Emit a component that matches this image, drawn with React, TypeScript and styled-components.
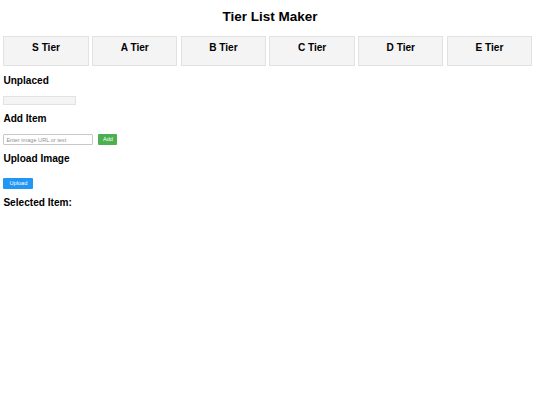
import React from "react";
import styled, { createGlobalStyle } from "styled-components";

const GlobalStyle = createGlobalStyle`
  html, body { margin: 0; padding: 0; background: #ffffff; }
  body { font-family: "Liberation Sans", Arial, sans-serif; color: #000; }
`;

const Page = styled.div`
  padding: 0 3.4px;
  display: flex;
  flex-direction: column;
  align-items: flex-start;
`;

const Title = styled.h1`
  align-self: stretch;
  margin: 9px 0 0;
  font-size: 13.5px;
  line-height: 15px;
  font-weight: bold;
  text-align: center;
`;

const TierRow = styled.div`
  display: flex;
  gap: 3.4px;
  margin: 12px 0 1px;
`;

const TierBox = styled.div`
  box-sizing: border-box;
  width: 85.3px;
  height: 30px;
  padding-top: 4.5px;
  background: #f4f4f4;
  border: 1px solid #e2e2e2;
  font-size: 10.1px;
  line-height: 12px;
  font-weight: bold;
  text-align: center;
`;

const SectionTitle = styled.h2<{ $gapBelow?: number }>`
  margin: 8px 0 ${(p) => p.$gapBelow ?? 9}px;
  font-size: 10.1px;
  line-height: 12px;
  font-weight: bold;
`;

const DropZone = styled.div`
  box-sizing: border-box;
  width: 73px;
  height: 9px;
  background: #f4f4f4;
  border: 1px solid #e2e2e2;
`;

const FormRow = styled.div`
  display: flex;
  align-items: center;
  gap: 5px;
`;

const TextInput = styled.input`
  box-sizing: border-box;
  width: 90px;
  height: 11px;
  padding: 0 2px;
  border: 0.6px solid #c8c8c8;
  border-radius: 1px;
  font-family: "Liberation Sans", Arial, sans-serif;
  font-size: 5.6px;
  outline: none;
  &::placeholder { color: #8f8f8f; }
`;

const ActionButton = styled.button<{ $color: string; $width: number }>`
  box-sizing: border-box;
  width: ${(p) => p.$width}px;
  height: 10.5px;
  padding: 0;
  border: none;
  border-radius: 1px;
  background: ${(p) => p.$color};
  color: #fff;
  font-family: "Liberation Sans", Arial, sans-serif;
  font-size: 5.6px;
  line-height: 10.5px;
  text-align: center;
`;

const tiers = ["S Tier", "A Tier", "B Tier", "C Tier", "D Tier", "E Tier"];

export default function App() {
  return (
    <>
      <GlobalStyle />
      <Page>
        <Title>Tier List Maker</Title>
        <TierRow>
          {tiers.map((t) => (
            <TierBox key={t}>{t}</TierBox>
          ))}
        </TierRow>
        <SectionTitle>Unplaced</SectionTitle>
        <DropZone />
        <SectionTitle>Add Item</SectionTitle>
        <FormRow>
          <TextInput placeholder="Enter image URL or text" />
          <ActionButton $color="#4caf50" $width={19}>Add</ActionButton>
        </FormRow>
        <SectionTitle $gapBelow={13}>Upload Image</SectionTitle>
        <ActionButton $color="#2196f3" $width={30}>Upload</ActionButton>
        <SectionTitle>Selected Item:</SectionTitle>
      </Page>
    </>
  );
}
